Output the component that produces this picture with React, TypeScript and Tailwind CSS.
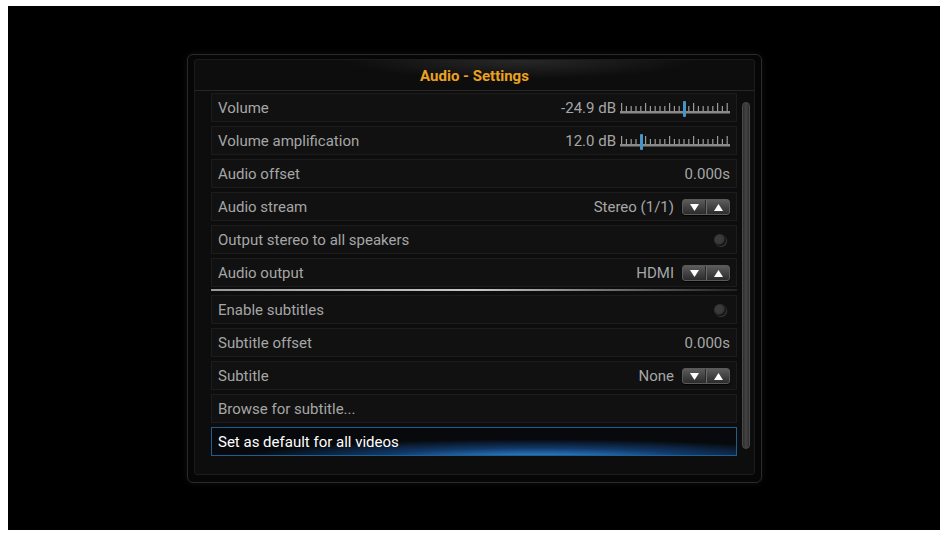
import React from "react";

type Row =
  | { label: string; kind: "slider"; value: string; knob: number }
  | { label: string; kind: "text"; value: string }
  | { label: string; kind: "spin"; value: string }
  | { label: string; kind: "radio" }
  | { label: string; kind: "plain"; selected?: boolean };

const audioRows: Row[] = [
  { label: "Volume", kind: "slider", value: "-24.9 dB", knob: 63 },
  { label: "Volume amplification", kind: "slider", value: "12.0 dB", knob: 20 },
  { label: "Audio offset", kind: "text", value: "0.000s" },
  { label: "Audio stream", kind: "spin", value: "Stereo (1/1)" },
  { label: "Output stereo to all speakers", kind: "radio" },
  { label: "Audio output", kind: "spin", value: "HDMI" },
];

const subtitleRows: Row[] = [
  { label: "Enable subtitles", kind: "radio" },
  { label: "Subtitle offset", kind: "text", value: "0.000s" },
  { label: "Subtitle", kind: "spin", value: "None" },
  { label: "Browse for subtitle...", kind: "plain" },
  { label: "Set as default for all videos", kind: "plain", selected: true },
];

function Slider({ knob }: { knob: number }) {
  const ticks = Array.from({ length: 23 }, (_, i) => i);
  return (
    <svg width="110" height="20" viewBox="0 0 110 20" className="block">
      {ticks.map((i) => {
        const x = 1 + i * 4.8;
        const major = i % 5 === 0 || i === 22;
        return (
          <rect
            key={i}
            x={x}
            y={major ? 5 : 8}
            width="1.2"
            height={major ? 8 : 5}
            fill="#9a9a9a"
          />
        );
      })}
      <rect x="0" y="13" width="110" height="2.5" fill="#8a8a8a" />
      <rect x={knob} y="3" width="3" height="16" rx="1" fill="#4596c6" />
    </svg>
  );
}

function Spin() {
  return (
    <div className="flex h-[16px] w-[48px] overflow-hidden rounded-[3px] border border-[#5a5a5a] bg-gradient-to-b from-[#5c5c5c] to-[#2c2c2c] shadow-[0_1px_1px_rgba(0,0,0,0.8)]">
      <div className="flex flex-1 items-center justify-center border-r border-[#2a2a2a]">
        <svg width="9" height="7" viewBox="0 0 9 7">
          <path d="M0 0 L9 0 L4.5 7 Z" fill="#ffffff" />
        </svg>
      </div>
      <div className="flex flex-1 items-center justify-center border-l border-[#6a6a6a]">
        <svg width="9" height="7" viewBox="0 0 9 7">
          <path d="M0 7 L9 7 L4.5 0 Z" fill="#ffffff" />
        </svg>
      </div>
    </div>
  );
}

function Radio() {
  return (
    <div className="mr-[4px] h-[12px] w-[12px] rounded-full bg-[#3a3a3a] shadow-[inset_-1px_-1px_2px_rgba(0,0,0,0.9),1px_1px_1px_rgba(100,100,100,0.5)]" />
  );
}

function SettingRow({ row }: { row: Row }) {
  const selected = row.kind === "plain" && row.selected;
  return (
    <div
      className={`flex h-[29px] items-center justify-between pl-[6px] pr-[6px] pt-[1px] ${
        selected
          ? "border border-[#1f5f90] bg-[radial-gradient(ellipse_70%_90%_at_62%_115%,rgba(55,155,245,1),rgba(25,95,180,0.55)_45%,rgba(0,0,0,0)_82%)] bg-[#07090c] text-white"
          : "border border-[#1c1c1c] bg-[#111111] text-[#a6a6a6]"
      }`}
    >
      <span>{row.label}</span>
      {row.kind === "slider" && (
        <div className="flex items-center gap-[4px]">
          <span>{row.value}</span>
          <Slider knob={row.knob} />
        </div>
      )}
      {row.kind === "text" && <span>{row.value}</span>}
      {row.kind === "spin" && (
        <div className="flex items-center gap-[8px]">
          <span>{row.value}</span>
          <Spin />
        </div>
      )}
      {row.kind === "radio" && <Radio />}
    </div>
  );
}

export default function App() {
  return (
    <div
      className="h-[536px] w-[945px] overflow-hidden bg-white pl-[8px] pt-[6px]"
      style={{ fontFamily: "Roboto, 'Noto Sans', sans-serif" }}
    >
      <div className="h-[524px] w-[932px] bg-black pl-[179px] pt-[48px]">
        <div className="h-[429px] w-[575px] rounded-[6px] border border-[#2a2a2a] bg-[#060606] pb-[7px] pl-[6px] pr-[6px] pt-[4px] shadow-[0_0_6px_rgba(60,60,60,0.3)]">
          <div className="flex h-[416px] w-[561px] flex-col rounded-[3px] border border-[#1b1b1b] bg-[#0d0d0d]">
            <div className="flex h-[31px] items-center justify-center border-b border-[#262626] bg-[radial-gradient(ellipse_45%_90%_at_58%_0%,rgba(90,90,90,0.35),rgba(0,0,0,0)_70%)] pt-[2px] text-[15px] font-bold text-[#eba21f]">
              Audio - Settings
            </div>
            <div className="flex flex-1 pl-[16px] pt-[2px] text-[15px]">
              <div className="flex w-[526px] flex-col">
                <div className="flex flex-col gap-[4px]">
                  {audioRows.map((r) => (
                    <SettingRow key={r.label} row={r} />
                  ))}
                </div>
                <div className="mb-[4px] mt-[2px] h-[2px] bg-gradient-to-r from-[#9a9a9a] via-[#c8c8c8] to-[rgba(120,120,120,0.2)]" />
                <div className="flex flex-col gap-[4px]">
                  {subtitleRows.map((r) => (
                    <SettingRow key={r.label} row={r} />
                  ))}
                </div>
              </div>
              <div className="ml-[5px] mt-[9px] h-[347px] w-[8px] rounded-full border border-[#4a4a4a] bg-gradient-to-r from-[#2e2e2e] via-[#444444] to-[#2e2e2e]" />
            </div>
          </div>
        </div>
      </div>
    </div>
  );
}
